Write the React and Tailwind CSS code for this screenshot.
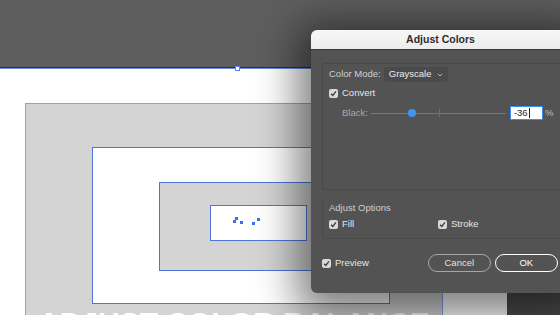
import { ChevronDown } from "lucide-react";

const Check = ({ label, className = "" }) => (
  <div className={`flex items-center gap-[4px] ${className}`}>
    <span className="flex h-[9px] w-[9px] items-center justify-center rounded-[2px] bg-[#d9d9d9]">
      <svg width="7" height="7" viewBox="0 0 8 8">
        <path d="M1.2 4.2 L3.2 6.2 L6.8 1.6" fill="none" stroke="#3d3d3d" strokeWidth="1.5" />
      </svg>
    </span>
    <span className="text-[9.5px] text-[#e6e6e6]">{label}</span>
  </div>
);

const Artboard = () => (
  <div className="absolute left-0 top-[67px] h-[248px] w-[507px] border-t border-[#2f2f2f] bg-white">
    {/* selection bounds */}
    <div className="absolute left-0 top-0 h-[1px] w-[320px] bg-[#6d8fe6]" />
    <div className="absolute left-[235px] top-[-2px] h-[5px] w-[5px] border border-[#5b82e8] bg-white" />

    <div className="absolute left-[25px] top-[35px] h-[230px] w-[418px] border border-[#86a1ea] bg-[#d4d4d4]" />
    <div className="absolute left-[92px] top-[79px] h-[157px] w-[298px] border border-[#4f75dc] bg-white" />
    <div className="absolute left-[159px] top-[114px] h-[89px] w-[170px] border border-[#4f75dc] bg-[#d4d4d4]" />
    <div className="absolute left-[210px] top-[137px] h-[36px] w-[97px] border border-[#4f75dc] bg-white" />

    {/* anchor points */}
    <div className="absolute left-[235px] top-[149px] h-[3px] w-[3px] bg-[#3f6df0]" />
    <div className="absolute left-[233px] top-[152px] h-[3px] w-[3px] bg-[#3f6df0]" />
    <div className="absolute left-[240px] top-[153px] h-[3px] w-[3px] bg-[#3f6df0]" />
    <div className="absolute left-[252px] top-[154px] h-[3px] w-[3px] bg-[#3f6df0]" />
    <div className="absolute left-[257px] top-[150px] h-[3px] w-[3px] bg-[#3f6df0]" />

    <div className="absolute left-[38px] top-[240px] whitespace-nowrap text-[30px] font-black leading-none text-white [font-family:'Liberation_Sans',Arial,sans-serif]">
      ADJUST COLOR BALANCE
    </div>
  </div>
);

const Dialog = () => (
  <div className="absolute left-[311px] top-[30px] flex h-[263px] w-[262px] flex-col overflow-hidden rounded-[6px] bg-[#535353] shadow-[0_8px_40px_14px_rgba(0,0,0,0.5)]">
    <div className="flex h-[20px] items-center justify-center border-b border-[#3a3a3a] bg-gradient-to-b from-[#f7f7f7] to-[#ececec] pr-[3px]">
      <span className="text-[10.5px] font-bold text-[#2d2d2d]">Adjust Colors</span>
    </div>

    <div className="mx-[11px] mt-[13px] flex h-[127px] flex-col rounded-[2px] border border-[#494949] px-[6px] pt-[3px]">
      <div className="flex items-center gap-[3px]">
        <span className="text-[9.5px] text-[#cfcfcf]">Color Mode:</span>
        <div className="flex h-[15px] w-[64px] items-center justify-between rounded-[2px] bg-[#4a4a4a] pl-[5px] pr-[4px]">
          <span className="text-[9.5px] text-[#ececec]">Grayscale</span>
          <ChevronDown size={8} strokeWidth={2.5} className="text-[#d0d0d0]" />
        </div>
      </div>
      <Check label="Convert" className="mt-[4px]" />
      <div className="mt-[6px] flex items-center pl-[13px]">
        <span className="text-[9.5px] text-[#a9a9a9]">Black:</span>
        <div className="relative ml-[3px] flex h-[10px] w-[135px] items-center">
          <div className="h-[1px] w-full bg-[#767676]" />
          <div className="absolute left-[68px] top-[1px] h-[8px] w-[1px] bg-[#6e6e6e]" />
          <div className="absolute left-[37px] top-[1px] h-[8px] w-[8px] rounded-full bg-[#3f96f0]" />
        </div>
        <div className="ml-[4px] flex h-[14px] w-[33px] items-center border border-[#3b8df5] bg-white pl-[3px]">
          <span className="text-[9.5px] text-[#222]">-36</span>
          <span className="ml-[1px] h-[10px] w-[1px] bg-[#222]" />
        </div>
        <span className="ml-[2px] text-[9.5px] text-[#bdbdbd]">%</span>
      </div>
    </div>

    <div className="mx-[11px] mt-[6px] flex h-[43px] flex-col rounded-[2px] border border-t-0 border-[#4b4b4b] px-[6px] pt-[5px]">
      <span className="text-[9.5px] text-[#cfcfcf]">Adjust Options</span>
      <div className="mt-[2px] flex items-center">
        <Check label="Fill" className="w-[109px]" />
        <Check label="Stroke" />
      </div>
    </div>

    <div className="mt-[15px] flex items-center pl-[11px]">
      <Check label="Preview" />
      <button className="ml-[59px] flex h-[18px] w-[63px] items-center justify-center rounded-full border border-[#a6a6a6] text-[9.5px] text-[#e2e2e2]">
        Cancel
      </button>
      <button className="ml-[4px] flex h-[18px] w-[63px] items-center justify-center rounded-full border-[1.5px] border-white text-[9.5px] text-white">
        OK
      </button>
    </div>
  </div>
);

export default function App() {
  return (
    <div className="relative h-[315px] w-[560px] overflow-hidden bg-[#5e5e5e] [font-family:'Liberation_Sans',Arial,sans-serif]">
      <div className="absolute left-[507px] top-[67px] h-[248px] w-[53px] bg-[#4d4d4d]" />
      <Artboard />
      <Dialog />
    </div>
  );
}
